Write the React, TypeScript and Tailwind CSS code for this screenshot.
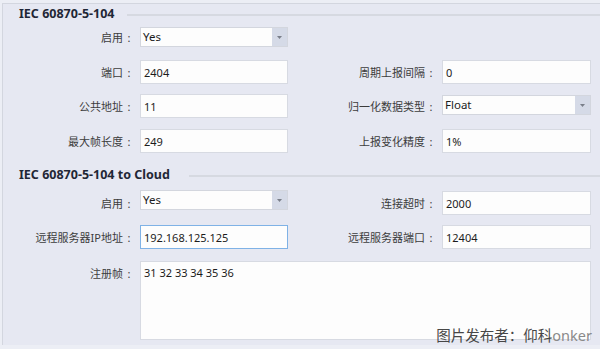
import React from "react";

const Label = ({ text, w }: { text: string; w: string }) => (
  <div className={`${w} shrink-0 h-[24px] flex items-center justify-end pr-[5px] text-[11px] text-[#3c3c3c] leading-none`}>
    <span>{text}</span>
    <span className="w-[12px] text-center">:</span>
  </div>
);

const Input = ({ value, w, blue }: { value: string; w: string; blue?: boolean }) => (
  <div
    className={`${w} shrink-0 h-[24px] flex items-center px-[3px] bg-[#fdfdfd] border ${
      blue ? "border-[#7fb2e6]" : "border-[#d7dae2]"
    } text-[11px] text-[#1c1c1c] leading-none`}
  >
    {value}
  </div>
);

const Select = ({ value, w, extra }: { value: string; w: string; extra?: string }) => (
  <div
    className={`${w} shrink-0 h-[20px] flex items-stretch bg-[#fdfdfd] border border-[#d3d6de] text-[11.5px] text-[#1c1c1c] leading-none ${extra ?? ""}`}
  >
    <div className="flex-1 flex items-center px-[2px]">{value}</div>
    <div className="w-[15px] bg-[#d5dae7] flex items-center justify-center">
      <svg width="5" height="3" viewBox="0 0 5 3">
        <polygon points="0,0 5,0 2.5,3" fill="#7a7f8a" />
      </svg>
    </div>
  </div>
);

const Heading = ({ text, w }: { text: string; w: string }) => (
  <div className="h-[20px] flex items-center">
    <div className={`${w} shrink-0 pl-[16px] text-[12.5px] font-bold text-[#1f2736] leading-none whitespace-nowrap`}>
      {text}
    </div>
    <div className="flex-1 h-[2px] bg-[#d6d9e1] mt-[2px]" />
  </div>
);

export default function App() {
  return (
    <div className="relative w-[600px] h-[349px] overflow-hidden bg-[#eceef5] font-['Noto_Sans','Noto_Sans_CJK_SC',sans-serif]">
      <div className="ml-[2px] mt-[3px] h-[342px] border-l border-t border-[#d3d6df] bg-[#e6e8f2] flex flex-col">
        <Heading text="IEC 60870-5-104" w="w-[124px]" />
        <div className="mt-[1px] flex items-center">
          <Label text="启用" w="w-[137px]" />
          <Select value="Yes" w="w-[148px]" />
        </div>
        <div className="mt-[11px] flex items-center">
          <Label text="端口" w="w-[137px]" />
          <Input value="2404" w="w-[148px]" />
          <Label text="周期上报间隔" w="w-[154px]" />
          <Input value="0" w="w-[149px]" />
        </div>
        <div className="mt-[10px] flex items-start">
          <Label text="公共地址" w="w-[137px]" />
          <Input value="11" w="w-[148px]" />
          <Label text="归一化数据类型" w="w-[154px]" />
          <Select value="Float" w="w-[149px]" extra="mt-[1px] h-[19px]" />
        </div>
        <div className="mt-[11px] flex items-center">
          <Label text="最大帧长度" w="w-[137px]" />
          <Input value="249" w="w-[148px]" />
          <Label text="上报变化精度" w="w-[154px]" />
          <Input value="1%" w="w-[149px]" />
        </div>
        <div className="mt-[12px]">
          <Heading text="IEC 60870-5-104 to Cloud" w="w-[186px]" />
        </div>
        <div className="mt-[6px] flex items-start">
          <Label text="启用" w="w-[137px]" />
          <Select value="Yes" w="w-[148px]" extra="-mt-[1px]" />
          <Label text="连接超时" w="w-[154px]" />
          <Input value="2000" w="w-[149px]" />
        </div>
        <div className="mt-[10px] flex items-center">
          <Label text="远程服务器IP地址" w="w-[137px]" />
          <Input value="192.168.125.125" w="w-[148px]" blue />
          <Label text="远程服务器端口" w="w-[154px]" />
          <Input value="12404" w="w-[149px]" />
        </div>
        <div className="mt-[12px] flex items-start">
          <Label text="注册帧" w="w-[137px]" />
          <div className="w-[451px] h-[79px] bg-[#fdfdfd] border border-[#d7dae2] px-[3px] pt-[4px] text-[11px] text-[#1c1c1c] leading-[14px]">
            31 32 33 34 35 36
          </div>
        </div>
      </div>
      <div className="absolute right-[8px] top-[325px] text-[14.5px] leading-[20px] whitespace-nowrap text-[#474747]">
        图片发布者：仰科<span className="text-[#8a8a8a]">onker</span>
      </div>
    </div>
  );
}
